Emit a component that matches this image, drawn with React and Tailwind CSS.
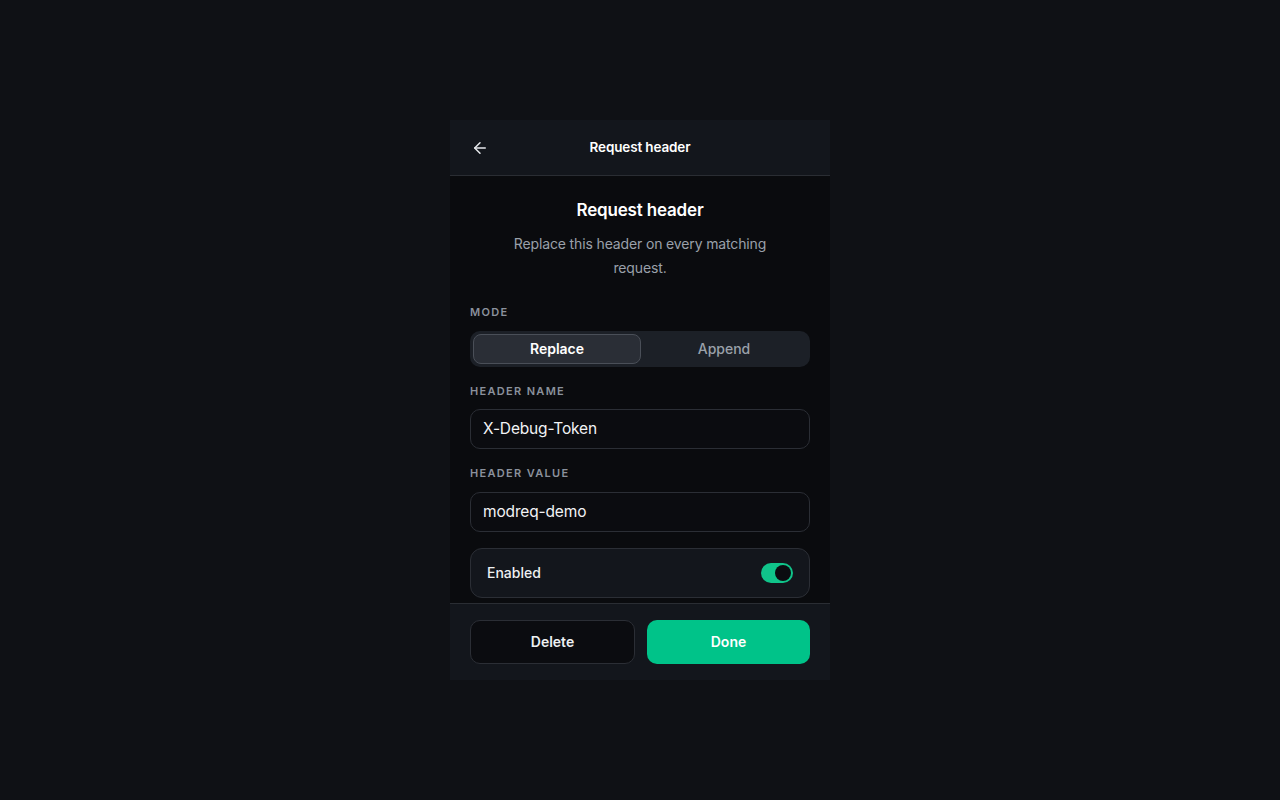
import { ArrowLeft } from 'lucide-react'

function FieldLabel({ children }) {
  return (
    <div className="text-[11px] leading-4 font-semibold tracking-[0.12em] uppercase text-[#8b919c] mb-[10.5px]">
      {children}
    </div>
  )
}

function Toggle({ on }) {
  return (
    <div className={`w-8 h-5 rounded-full p-[2px] flex ${on ? 'bg-[#10c48a] justify-end' : 'bg-[#2a2e36] justify-start'}`}>
      <div className="w-4 h-4 rounded-full bg-[#0b0c10]" />
    </div>
  )
}

export default function App() {
  return (
    <div className="min-h-screen w-full bg-[#0f1115] flex items-start justify-center pt-[120px]" style={{ fontFamily: 'Inter, "Noto Sans", sans-serif' }}>
      <div className="w-[380px] h-[560px] flex flex-col bg-[#0a0b0e]">
        {/* top bar */}
        <div className="h-14 flex items-center pl-[21px] pr-5 bg-[#13161c] border-b border-[#2a2d33] relative">
          <ArrowLeft size={18} strokeWidth={2} className="text-[#e6e8eb]" />
          <div className="absolute inset-0 flex items-center justify-center text-[13.5px] tracking-[-0.01em] font-semibold text-white pointer-events-none">
            Request header
          </div>
        </div>

        {/* body */}
        <div className="flex-1 overflow-hidden px-5 pt-5">
          <h1 className="text-center text-[17px] leading-7 tracking-[-0.01em] font-semibold text-white">Request header</h1>
          <p className="mt-2 text-center text-sm leading-6 tracking-[-0.01em] text-[#9aa0aa] px-10">
            Replace this header on every matching request.
          </p>

          <div className="mt-6">
            <FieldLabel>Mode</FieldLabel>
            <div className="h-9 rounded-[10px] bg-[#1c2027] p-[3px] flex">
              <button className="flex-1 rounded-lg bg-[#2a2e36] border border-[#4a4f58] text-sm font-semibold text-white">
                Replace
              </button>
              <button className="flex-1 rounded-lg text-sm font-medium text-[#9aa0aa]">
                Append
              </button>
            </div>
          </div>

          <div className="mt-4">
            <FieldLabel>Header name</FieldLabel>
            <div className="h-10 rounded-[10px] border border-[#2b2e35] bg-[#0b0c10] px-3 flex items-center text-[15.5px] tracking-[-0.01em] text-[#f2f3f5]">
              X-Debug-Token
            </div>
          </div>

          <div className="mt-4">
            <FieldLabel>Header value</FieldLabel>
            <div className="h-10 rounded-[10px] border border-[#2b2e35] bg-[#0b0c10] px-3 flex items-center text-[15.5px] tracking-[-0.01em] text-[#f2f3f5]">
              modreq-demo
            </div>
          </div>

          <div className="mt-4 h-[50px] rounded-xl border border-[#2b2e35] bg-[#13161c] px-4 flex items-center justify-between">
            <span className="text-sm font-medium text-[#eef0f2]">Enabled</span>
            <Toggle on />
          </div>
        </div>

        {/* footer */}
        <div className="border-t border-[#2a2d33] bg-[#13161c] px-5 py-4 flex gap-3">
          <button className="flex-1 h-11 rounded-[10px] border border-[#2b2e35] bg-[#0b0c10] text-sm font-semibold text-[#eef0f2]">
            Delete
          </button>
          <button className="flex-1 h-11 rounded-[10px] bg-[#00c389] text-sm font-semibold text-white">
            Done
          </button>
        </div>
      </div>
    </div>
  )
}
